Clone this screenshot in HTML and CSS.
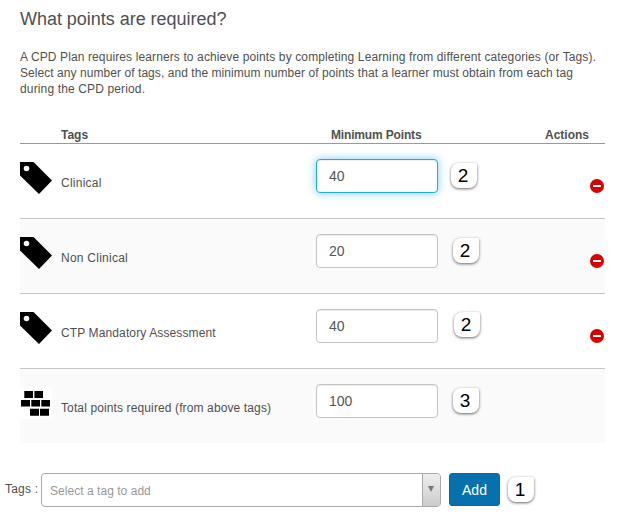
FILE: index.html
```html
<!DOCTYPE html>
<html lang="en">
<head>
<meta charset="utf-8">
<title>CPD Plan points</title>
<link rel="stylesheet" href="styles.css">
</head>
<body>
<svg width="0" height="0" class="defs">
  <symbol id="tag" viewBox="0 0 32 32"><path fill="#000" fill-rule="evenodd" d="M0 0H13.5L32 18.5 19 32 0 13.5ZM6.5 3.7a2.8 2.8 0 1 0 0 5.6a2.8 2.8 0 1 0 0-5.6Z"/></symbol>
  <symbol id="minus" viewBox="0 0 14 14"><circle cx="7" cy="7" r="7" fill="#d90000"/><path fill="#fff" d="M3 6h8v2H3z"/></symbol>
</svg>
<main>
  <section class="points">
    <h1>What points are required?</h1>
    <p class="intro"><span class="l1">A CPD Plan requires learners to achieve points by completing Learning from different categories (or Tags).</span><br><span class="l2">Select any number of tags, and the minimum number of points that a learner must obtain from each tag</span><br><span class="l3">during the CPD period.</span></p>
    <div class="grid head"><span></span><span class="h-tags">Tags</span><span class="h-min">Minimum Points</span><span class="h-act">Actions</span></div>
    <div class="grid row">
      <svg class="icon"><use href="#tag"/></svg><span class="name short">Clinical</span>
      <div class="field"><input class="focused" value="40"><b class="badge first">2</b></div>
      <svg class="remove"><use href="#minus"/></svg>
    </div>
    <div class="grid row alt">
      <svg class="icon"><use href="#tag"/></svg><span class="name short">Non Clinical</span>
      <div class="field"><input value="20"><b class="badge">2</b></div>
      <svg class="remove"><use href="#minus"/></svg>
    </div>
    <div class="grid row">
      <svg class="icon"><use href="#tag"/></svg><span class="name">CTP Mandatory Assessment</span>
      <div class="field"><input value="40"><b class="badge third">2</b></div>
      <svg class="remove"><use href="#minus"/></svg>
    </div>
    <div class="grid row alt last">
      <svg class="icon" viewBox="0 0 32 32"><path fill="#fff" d="M0 0h32v32H0z"/><path d="M4.3 4h8.7v7H4.3zM14.4 4h8.6v7h-8.6zM1 13h9v6.5H1zM11.3 13h8.7v6.5h-8.7zM21.3 13h8.7v6.5h-8.7zM10 21.7h9v7h-9zM20 21.7h9v7h-9z"/></svg><span class="name">Total points required (from above tags)</span>
      <div class="field"><input value="100"><b class="badge">3</b></div>
    </div>
  </section>
  <div class="adder">
    <span class="label">Tags :</span>
    <div class="select"><span class="placeholder">Select a tag to add</span><span class="arrow"><svg width="6" height="6" viewBox="0 0 6 6"><path fill="#777" d="M0 0h6L3 6z"/></svg></span></div>
    <button>Add</button>
    <b class="badge one">1</b>
  </div>
</main>
</body>
</html>
```
FILE: styles.css
```css
* { box-sizing: border-box; }
body {
  margin: 0;
  background: #fff;
  color: #505050;
  font: 12px/16px "Liberation Sans", Arial, sans-serif;
  letter-spacing: 0.12px;
}
.defs { position: absolute; }
main { height: 519px; overflow: hidden; }
.points { width: 585px; margin-left: 20px; padding-top: 7px; }
h1 { margin: 0; font-size: 18px; line-height: 24px; font-weight: 400; letter-spacing: -0.03px; }
.intro { margin: 18px 0 0; white-space: nowrap; }
.l1 { letter-spacing: 0.115px; }
.l2 { letter-spacing: 0.06px; }
.l3 { letter-spacing: 0.14px; }
.grid { display: grid; grid-template-columns: 41px 255px 1fr 60px; }
.head { height: 17px; margin-top: 30px; border-bottom: 1px solid #999; font-weight: 700; line-height: 16px; letter-spacing: 0; }
.h-min { padding-left: 15px; letter-spacing: -0.16px; }
.h-act { white-space: nowrap; }
.row { height: 75px; border-bottom: 1px solid #c6c6c6; align-items: start; }
.alt { background: #fafafa; }
.last { height: 74px; border-bottom: 0; }
.icon { width: 32px; height: 32px; margin-top: 18px; }
.name { margin-top: 31px; white-space: nowrap; }
.short { letter-spacing: 0.25px; }
.field { position: relative; margin-top: 15px; }
input {
  display: block;
  width: 122px;
  height: 34px;
  padding: 0 12px;
  border: 1px solid #c4c4c4;
  border-radius: 4px;
  background: #fff;
  box-shadow: inset 0 1px 1px rgba(0,0,0,.075);
  color: #555;
  font: 14px "Liberation Sans", Arial, sans-serif;
}
.focused { border-color: #1caaf3; box-shadow: inset 0 1px 1px rgba(0,0,0,.075), 0 0 8px rgba(28,170,243,.6); }
.remove { width: 14px; height: 14px; margin: 35px 0.7px 0 0; justify-self: end; }
.badge {
  position: absolute;
  left: 137px;
  top: 4px;
  width: 26px;
  height: 25px;
  padding-right: 2px;
  border-radius: 8px 2px 8px 8px;
  background: #fff;
  box-shadow: 0 1px 3px rgba(0,0,0,.6);
  color: #000;
  font-size: 19px;
  font-weight: 400;
  line-height: 25px;
  letter-spacing: 0;
  text-align: center;
}
.first { left: 135px; }
.third { left: 138px; top: 3px; }
.adder { display: flex; margin: 30px 0 0 5px; height: 34px; }
.label { width: 36px; padding-top: 8px; letter-spacing: 0.2px; }
.select { display: flex; width: 400px; height: 34px; border: 1px solid #aaa; border-radius: 4px; overflow: hidden; color: #999; }
.placeholder { flex: 1; padding: 9px 0 0 8px; letter-spacing: 0.04px; }
.arrow { display: flex; width: 18px; align-items: center; justify-content: center; border-left: 1px solid #aaa; background: linear-gradient(#eee, #ccc); padding: 0 1px 3px 0; }
button { width: 51px; height: 33px; margin-left: 8px; padding: 0; border: 1px solid #0669a3; border-radius: 3px; background: #0771ae; color: #fff; font: 14px "Liberation Sans", Arial, sans-serif; }
.adder .one { position: static; margin: 4px 0 0 8px; }
```
